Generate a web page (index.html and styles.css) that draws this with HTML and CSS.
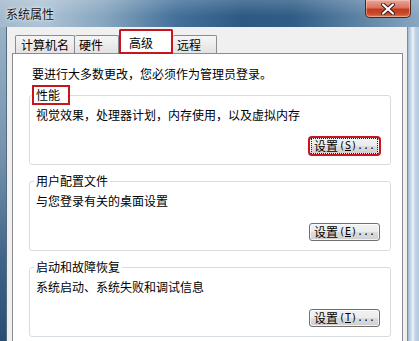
FILE: index.html
```html
<!DOCTYPE html>
<html lang="zh-CN">
<head>
<meta charset="utf-8">
<title>系统属性</title>
<link rel="stylesheet" href="styles.css">
</head>
<body>
<div class="window">
  <div class="titlebar">
    <span class="title">系统属性</span>
    <span class="close">
      <svg width="16" height="12" viewBox="0 0 16 12"><path d="M3 1.5 L13 10.5 M13 1.5 L3 10.5" stroke="#3a1a14" stroke-width="4" stroke-linecap="round"/><path d="M3 1.5 L13 10.5 M13 1.5 L3 10.5" stroke="#ffffff" stroke-width="2.2" stroke-linecap="round"/></svg>
    </span>
  </div>
  <div class="frame">
    <div class="edge-left"></div>
    <div class="client">
      <div class="tabs">
        <div class="tab t1">计算机名</div>
        <div class="tab t2">硬件</div>
        <div class="tab selected">高级</div>
        <div class="tab t4">远程</div>
      </div>
      <div class="panel">
        <div class="intro">要进行大多数更改，您必须作为管理员登录。</div>
        <fieldset class="group">
          <legend class="legend mark">性能</legend>
          <div class="desc">视觉效果，处理器计划，内存使用，以及虚拟内存</div>
          <div class="actions"><button class="btn focus"><span class="inner">设置<span class="mn">(<u>S</u>)...</span></span></button></div>
        </fieldset>
        <fieldset class="group">
          <legend class="legend">用户配置文件</legend>
          <div class="desc">与您登录有关的桌面设置</div>
          <div class="actions"><button class="btn"><span class="inner">设置<span class="mn">(<u>E</u>)...</span></span></button></div>
        </fieldset>
        <fieldset class="group">
          <legend class="legend">启动和故障恢复</legend>
          <div class="desc">系统启动、系统失败和调试信息</div>
          <div class="actions"><button class="btn"><span class="inner">设置<span class="mn">(<u>T</u>)...</span></span></button></div>
        </fieldset>
      </div>
    </div>
    <div class="edge-right"></div>
  </div>
</div>
</body>
</html>
```

FILE: styles.css
```css
html, body {
  margin: 0;
  padding: 0;
}
body {
  width: 419px;
  height: 341px;
  overflow: hidden;
  font-family: "Noto Sans CJK SC", "Liberation Sans", sans-serif;
  font-size: 12px;
  color: #000;
}
.window {
  width: 419px;
  height: 341px;
  display: grid;
  grid-template-rows: 27px 1fr;
  background: linear-gradient(to right, #a3b9cc 0%, #aec3d5 10%, #86a5bf 25%, #43709a 42%, #2c5a83 58%, #2f5d86 70%, #5a81a3 85%, #88a7c1 100%);
}
.titlebar {
  display: flex;
  justify-content: space-between;
  align-items: flex-start;
  padding-left: 6px;
  padding-right: 8px;
  background: linear-gradient(to bottom, rgba(255,255,255,0.18), rgba(255,255,255,0) 60%);
}
.title {
  line-height: 27px;
  font-size: 12px;
  color: #111;
  text-shadow: 0 0 5px rgba(255,255,255,0.9), 0 0 2px rgba(255,255,255,0.9);
}
.close {
  width: 46px;
  height: 18px;
  box-sizing: border-box;
  border: 1px solid #4e231c;
  border-top: none;
  border-radius: 0 0 5px 5px;
  background: linear-gradient(to bottom, #e9a796 0%, #d9735e 45%, #c23c20 55%, #c9482a 80%, #e07a55 100%);
  box-shadow: inset 0 0 0 1px rgba(255,220,210,0.45);
  display: flex;
  align-items: center;
  justify-content: center;
}
.frame {
  display: flex;
  min-height: 0;
}
.edge-left {
  width: 6px;
  background: linear-gradient(to bottom, #9ab2c6 0%, #7593ae 40%, #3e6388 75%, #2a4e73 100%);
}
.edge-right {
  width: 11px;
  background: linear-gradient(to right, #9fb8cd 0px, #cbdbe9 3px, #eef4f9 5px, #c3d5e6 7px, #b2c9de 11px);
}
.client {
  flex: 1;
  display: flex;
  flex-direction: column;
  background: #f0f0f0;
  border-left: 1px solid #566a7e;
  border-right: 1px solid #7d8c9a;
  padding: 2px 4px 0 5px;
  min-height: 0;
}
.tabs {
  display: flex;
  align-items: flex-end;
  margin-left: 3px;
  height: 24px;
}
.tab {
  box-sizing: border-box;
  height: 18px;
  border: 1px solid #898c95;
  border-bottom: none;
  border-radius: 2px 2px 0 0;
  background: linear-gradient(to bottom, #f6f6f6 0%, #ececec 50%, #e2e2e2 100%);
  padding: 1px 0 0 4px;
  line-height: 16px;
  white-space: nowrap;
}
.t1 { width: 60px; padding-left: 5px; }
.t2 { width: 44px; border-left: none; }
.t4 { width: 44px; border-left: none; }
.tab.selected {
  position: relative;
  z-index: 1;
  width: 54px;
  height: 25px;
  margin-bottom: -1px;
  background: #ffffff;
  padding: 5px 0 0 9px;
  outline: 2px solid #c8141c;
  outline-offset: -2px;
}
.panel {
  flex: 1;
  background: #ffffff;
  border: 1px solid #898c95;
  border-bottom: none;
  padding: 12px 11px 0 16px;
}
.intro {
  line-height: 16px;
  padding-left: 3px;
  white-space: nowrap;
}
.group {
  margin: 8px 0 0;
  padding: 4px 10px 9px 6px;
  border: 1px solid #d5dde3;
  border-radius: 3px;
  min-width: 0;
}
.group:first-of-type {
  margin-top: 5px;
}
.legend {
  padding: 0 2px;
  margin-left: -2px;
  line-height: 16px;
}
.legend.mark {
  padding-right: 8px;
  outline: 2px solid #c8141c;
  outline-offset: 0;
}
.desc {
  line-height: 16px;
  white-space: nowrap;
}
.actions {
  display: flex;
  justify-content: flex-end;
  margin-top: 14px;
}
.btn {
  box-sizing: border-box;
  width: 71px;
  height: 18px;
  padding: 0;
  border: 1px solid #707070;
  border-radius: 3px;
  background: linear-gradient(to bottom, #f2f2f2 0%, #ebebeb 50%, #dddddd 51%, #cfcfcf 100%);
  box-shadow: inset 0 0 0 1px rgba(255,255,255,0.7);
  font-family: "Noto Sans CJK SC", sans-serif;
  font-size: 12px;
  color: #000;
  line-height: 14px;
  display: flex;
  align-items: center;
  justify-content: center;
}
.inner {
  display: flex;
  align-items: center;
  padding: 0 2px;
}
.mn {
  font-family: "DejaVu Sans Mono", "Liberation Mono", monospace;
  font-size: 10px;
  margin-left: 1px;
}
.btn.focus {
  outline: 2px solid #c8141c;
  outline-offset: -1px;
  border-color: #3c7fb1;
}
.btn.focus .inner {
  outline: 1px dotted #222;
  outline-offset: 0;
}
```
